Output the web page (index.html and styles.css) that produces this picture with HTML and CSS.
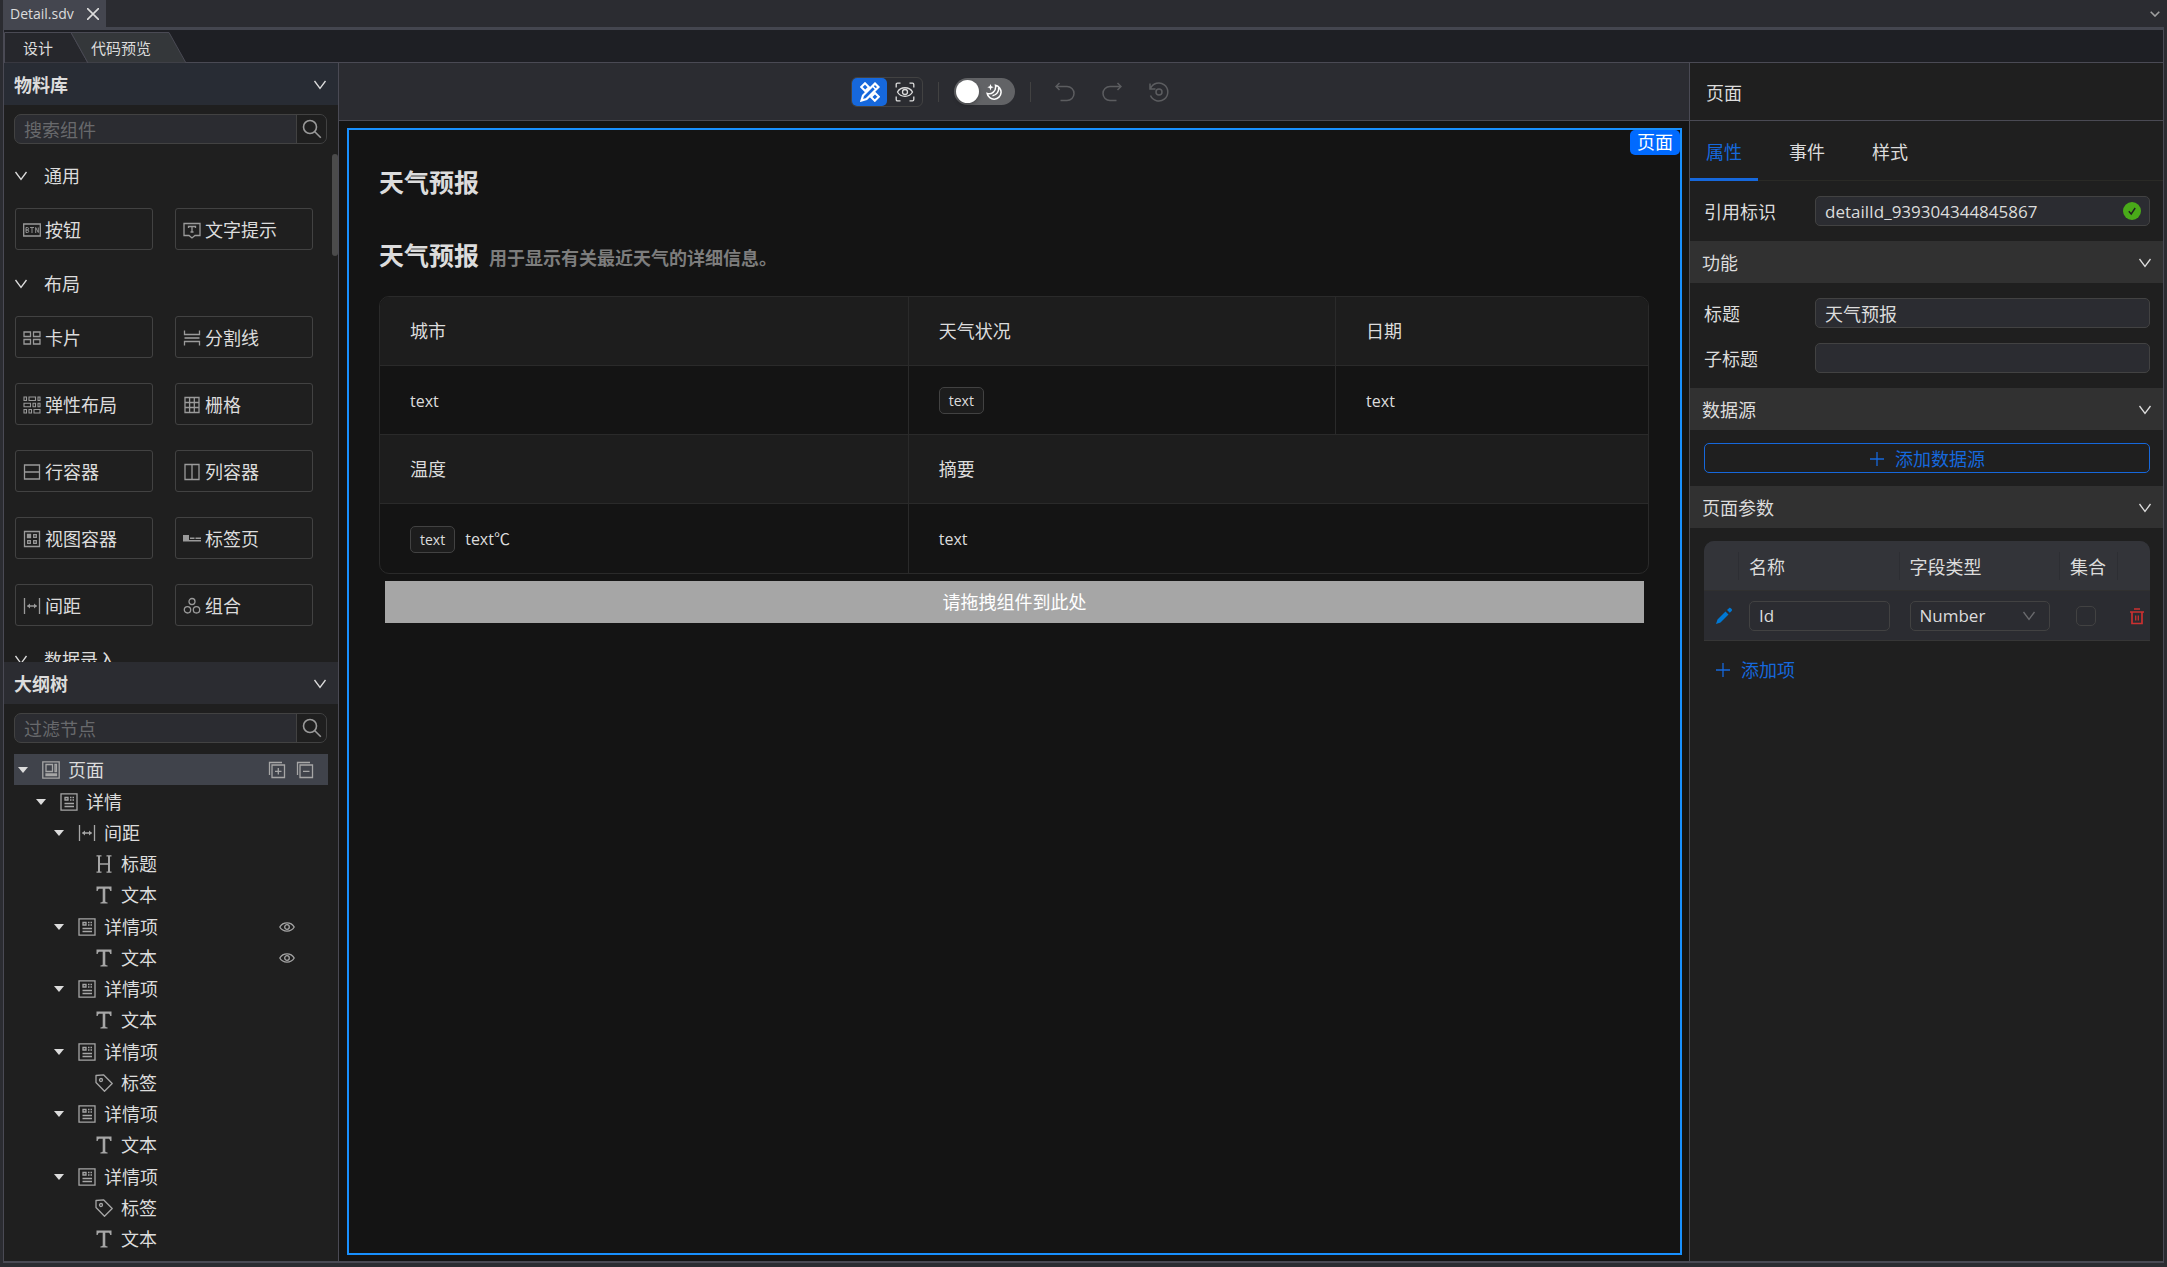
FILE: index.html
```html
<!DOCTYPE html>
<html lang="zh-CN">
<head>
<meta charset="utf-8">
<title>Detail.sdv</title>
<link rel="stylesheet" href="styles.css">
</head>
<body>
<svg class="sprite" aria-hidden="true">
  <symbol id="i-chevron" viewBox="0 0 14 14"><path d="M1.5 3l5.5 7.5L12.500 3"/></symbol>
  <symbol id="i-search" viewBox="0 0 20 20"><circle cx="8" cy="8" r="6.500"/><path d="M12.800 12.800l6 6"/></symbol>
  <symbol id="i-plus" viewBox="0 0 16 16"><path d="M8 1v14M1 8h14"/></symbol>
  <symbol id="i-btn" viewBox="0 0 18 18"><path d="M.7 3h16.600v12H.7z"/><path d="M3 6.500v5h1.500a1.200 1.200 0 0 0 0-2.500H3h1.300a1.200 1.200 0 0 0 0-2.500zM7 6.500h4M9 6.500V12M12.700 12V6.500l2.600 5V6.500" stroke-width=".9"/></symbol>
  <symbol id="i-tip" viewBox="0 0 18 18"><path d="M1 2.500h16v12h-5l-3 2.500-3-2.500H1z"/><path d="M5.500 7V5.500h7V7M9 5.500V11M7.500 11h3"/></symbol>
  <symbol id="i-card" viewBox="0 0 18 18"><path d="M1 3h6.500v4.500H1zM10.500 3H17v4.500h-6.500zM1 10.500h6.500V15H1zM10.500 10.500H17V15h-6.500z"/></symbol>
  <symbol id="i-divider" viewBox="0 0 18 18"><path d="M1.500 1.500v4h15v-4M1.500 16.500v-4h15v4"/><path d="M1.500 9h15" stroke-width="1.600"/></symbol>
  <symbol id="i-flex" viewBox="0 0 18 18"><path d="M1 1h2.500v3.500H1zM6 1h6.500v3.500H6zM15 1h2v3.500h-2zM1 7.300h6.500v3.500H1zM10 7.300h2.500v3.500H10zM15 7.300h2v3.500h-2zM1 13.500h2.500V17H1zM6 13.500h2.500V17H6zM11 13.500h6V17h-6z" stroke-width="1.100"/></symbol>
  <symbol id="i-grid" viewBox="0 0 18 18"><path d="M2 1.500h14v15H2zM6.600 1.500v15M11.300 1.500v15M2 6.500h14M2 11.500h14"/></symbol>
  <symbol id="i-row" viewBox="0 0 18 18"><path d="M1.500 2h15v14h-15zM1.500 9h15"/></symbol>
  <symbol id="i-col" viewBox="0 0 18 18"><path d="M2 1.500h14v15H2zM9 1.500v15"/></symbol>
  <symbol id="i-view" viewBox="0 0 18 18"><path d="M1.500 1.500h15v15h-15zM10.700 4.700h2.600v2.600h-2.600zM4.700 10.700h2.600v2.600H4.700zM10.700 10.700h2.600v2.600h-2.600z"/><path d="M4.500 4.500h3v3h-3z" fill="currentColor"/></symbol>
  <symbol id="i-tabs" viewBox="0 0 18 18"><path d="M0 5h6v5H0zM7 7.500h4.500V9H7zM12.500 7.500H18V9h-5.500zM0 10h18v1.400H0z" fill="currentColor" stroke="none"/></symbol>
  <symbol id="i-space" viewBox="0 0 18 18"><path d="M1.500 1v16M16.500 1v16M4.500 9h9"/><path d="M4 9l3-2.500v5zM14 9l-3-2.500v5z" fill="currentColor" stroke="none"/></symbol>
  <symbol id="i-group" viewBox="0 0 18 18"><circle cx="9" cy="4.500" r="3"/><circle cx="4.500" cy="12.800" r="3.200"/><circle cx="13.500" cy="12.800" r="3.200"/></symbol>
  <symbol id="i-page" viewBox="0 0 18 18"><path d="M.8.8h16.400v16.400H.8zM4 3.500h6.500v7H4zM13 3.500h1.500v7H13zM4 13h10.500v1.500H4z"/></symbol>
  <symbol id="i-detail" viewBox="0 0 18 18"><path d="M1 .8h16v16.400H1z"/><path d="M5 4.500h3v2.500H5zM10 4.500h1.500M12.500 4.500H14M10 7h1.500M12.500 7H14M4.500 10.500h9.500M4.500 13.500h9.500"/></symbol>
  <symbol id="i-h" viewBox="0 0 18 18"><path d="M1.500.8h5M11.500.8h5M1.500 17.200h5M11.500 17.200h5M4 9h10"/><path d="M4 1v16M14 1v16" stroke-width="2"/></symbol>
  <symbol id="i-t" viewBox="0 0 18 18"><path d="M1.500.500h15v4.500h-1.300c-.3-1.700-.8-2.200-2.300-2.200h-2.600v12.300c0 1 .6 1.300 2.300 1.400v1H5.400v-1c1.700-.1 2.300-.4 2.300-1.400V2.800H5c-1.500 0-2 .500-2.300 2.200H1.500z" fill="currentColor" stroke="none"/></symbol>
  <symbol id="i-tag" viewBox="0 0 18 18"><path d="M1 1.500L8.500.800l8.700 8.700-7.700 7.700L1 8.500z" stroke-linejoin="round"/><circle cx="6" cy="6" r="1.500"/></symbol>
  <symbol id="i-eye" viewBox="0 0 16 16"><path d="M.8 8C4 2.500 12 2.500 15.200 8 12 13.500 4 13.500.8 8z"/><circle cx="8" cy="8" r="2.300"/></symbol>
  <symbol id="i-expand" viewBox="0 0 18 18"><path d="M1.500 14V1.500H14M4 4h12.500v12.500H4zM10.300 7v6.500M7 10.300h6.500"/></symbol>
  <symbol id="i-collapse" viewBox="0 0 18 18"><path d="M1.500 14V1.500H14M4 4h12.500v12.500H4zM7 10.300h6.500"/></symbol>
  <symbol id="i-design" viewBox="0 0 20 20"><path d="M5 1.200l4 4-3.800 3.800-4-4zM15 11l3.800 3.800-4 4-3.800-3.800z" stroke-width="2"/><path d="M15 1.500l3.500 3.500L6.500 17l-5 1.500L3 13.500z" stroke-width="2.200"/><path d="M12.500 4l3.500 3.500" stroke-width="1.600"/></symbol>
  <symbol id="i-preview" viewBox="0 0 20 20"><path d="M1.200 5.500V2.500c0-.8.500-1.300 1.300-1.300h3M14.500 1.200h3c.8 0 1.300.5 1.300 1.300v3M18.800 14.500v3c0 .8-.5 1.300-1.300 1.300h-3M5.500 18.800h-3c-.8 0-1.300-.5-1.300-1.300v-3"/><path d="M2.500 10C5.500 4.300 14.500 4.300 17.500 10c-3 5.700-12 5.700-15 0z"/><circle cx="10" cy="10" r="2.500"/></symbol>
  <symbol id="i-moon" viewBox="0 0 16 16"><path d="M9.500 1.300A7 7 0 1 1 1.200 9.500C5.500 11 10.500 7 9.500 1.300zM12.500 3.500c.8 4-2 7.500-6 8.200" stroke-width="1.500"/><path d="M4.500 0l.9 2.300 2.300.9-2.300.9-.9 2.300-.9-2.300-2.300-.9 2.300-.9z" fill="currentColor" stroke="none"/></symbol>
  <symbol id="i-undo" viewBox="0 0 20 20"><path d="M4.500 1L1 4.500 4.500 8M1.300 4.500H12a7 7 0 0 1 0 14H5.500"/></symbol>
  <symbol id="i-redo" viewBox="0 0 20 20"><path d="M15.500 1L19 4.500 15.500 8M18.700 4.500H8a7 7 0 0 0 0 14h6.500"/></symbol>
  <symbol id="i-history" viewBox="0 0 20 20"><path d="M1 1.500v5.500h5.500M1.500 6.500A9 9 0 1 1 1.500 13.500"/><circle cx="10" cy="10" r="3"/></symbol>
  <symbol id="i-check" viewBox="0 0 18 18"><circle cx="9" cy="9" r="9" fill="#49aa19" stroke="none"/><path d="M5.800 9.300l2.400 2.700 4-6" stroke="#1f1f1f" stroke-width="1.400"/></symbol>
  <symbol id="i-pencil" viewBox="0 0 18 18"><path d="M1 17l1.500-4.500L10.500 4.500l3 3L5.500 15.500zM12 3L14 1.200c.7-.6 1.400-.4 2 .2l.6.700c.6.600.6 1.300 0 1.900L14.800 5.800z" fill="currentColor" stroke="none"/></symbol>
  <symbol id="i-trash" viewBox="0 0 16 18"><path d="M1 5h14M5 2h6M3 5v11.500h10V5" stroke-width="1.700"/><path d="M6.700 8.500v5M9.300 8.500v5" stroke-width="1.300"/></symbol>
  <symbol id="i-caret" viewBox="0 0 10 8"><path d="M0 1h10L5 7z" fill="currentColor" stroke="none"/></symbol>
</svg>

<div class="app">
  <header class="file-tabs">
    <div class="file-tab"><span>Detail.sdv</span>
      <button class="close" aria-label="关闭"><svg viewBox="0 0 12 12"><path d="M0 0l12 12M12 0L0 12"/></svg></button>
    </div>
    <button class="more" aria-label="更多"><svg viewBox="0 0 10 6"><path d="M.7.700L5 5l4.300-4.300"/></svg></button>
  </header>

  <div class="frame">
    <nav class="mode-tabs">
      <svg class="mode-shape" viewBox="0 0 184 31" aria-hidden="true">
        <path d="M.5 31V.5H67L84 31z" fill="#26272c"/>
        <path d="M67 .5h98L182 31H84z" fill="#34373a"/>
      </svg>
      <button class="mode mode-design">设计</button>
      <button class="mode mode-code">代码预览</button>
    </nav>

    <div class="workspace">
      <aside class="left">
        <section class="pane">
          <header class="pane-head lib"><h2>物料库</h2><svg class="i14"><use href="#i-chevron"/></svg></header>
          <form class="search"><input type="text" placeholder="搜索组件" aria-label="搜索组件"><button type="button" aria-label="搜索"><svg><use href="#i-search"/></svg></button></form>
          <div class="library">
            <h3 class="group"><svg class="i14"><use href="#i-chevron"/></svg>通用</h3>
            <div class="cards">
              <button><svg><use href="#i-btn"/></svg>按钮</button>
              <button><svg><use href="#i-tip"/></svg>文字提示</button>
            </div>
            <h3 class="group"><svg class="i14"><use href="#i-chevron"/></svg>布局</h3>
            <div class="cards">
              <button><svg><use href="#i-card"/></svg>卡片</button>
              <button><svg><use href="#i-divider"/></svg>分割线</button>
              <button><svg><use href="#i-flex"/></svg>弹性布局</button>
              <button><svg><use href="#i-grid"/></svg>栅格</button>
              <button><svg><use href="#i-row"/></svg>行容器</button>
              <button><svg><use href="#i-col"/></svg>列容器</button>
              <button><svg><use href="#i-view"/></svg>视图容器</button>
              <button><svg><use href="#i-tabs"/></svg>标签页</button>
              <button><svg><use href="#i-space"/></svg>间距</button>
              <button><svg><use href="#i-group"/></svg>组合</button>
            </div>
            <h3 class="group"><svg class="i14"><use href="#i-chevron"/></svg>数据录入</h3>
            <div class="thumb"></div>
          </div>
        </section>

        <section class="pane">
          <header class="pane-head"><h2>大纲树</h2><svg class="i14"><use href="#i-chevron"/></svg></header>
          <form class="search"><input type="text" placeholder="过滤节点" aria-label="过滤节点"><button type="button" aria-label="搜索"><svg><use href="#i-search"/></svg></button></form>
          <ul class="tree">
            <li class="d0 selected"><svg class="caret"><use href="#i-caret"/></svg><svg><use href="#i-page"/></svg>页面<span class="tools"><svg><use href="#i-expand"/></svg><svg><use href="#i-collapse"/></svg></span></li>
            <li class="d1"><svg class="caret"><use href="#i-caret"/></svg><svg><use href="#i-detail"/></svg>详情</li>
            <li class="d2"><svg class="caret"><use href="#i-caret"/></svg><svg><use href="#i-space"/></svg>间距</li>
            <li class="leaf"><svg><use href="#i-h"/></svg>标题</li>
            <li class="leaf"><svg><use href="#i-t"/></svg>文本</li>
            <li class="d2"><svg class="caret"><use href="#i-caret"/></svg><svg><use href="#i-detail"/></svg>详情项<svg class="eye"><use href="#i-eye"/></svg></li>
            <li class="leaf"><svg><use href="#i-t"/></svg>文本<svg class="eye"><use href="#i-eye"/></svg></li>
            <li class="d2"><svg class="caret"><use href="#i-caret"/></svg><svg><use href="#i-detail"/></svg>详情项</li>
            <li class="leaf"><svg><use href="#i-t"/></svg>文本</li>
            <li class="d2"><svg class="caret"><use href="#i-caret"/></svg><svg><use href="#i-detail"/></svg>详情项</li>
            <li class="leaf"><svg><use href="#i-tag"/></svg>标签</li>
            <li class="d2"><svg class="caret"><use href="#i-caret"/></svg><svg><use href="#i-detail"/></svg>详情项</li>
            <li class="leaf"><svg><use href="#i-t"/></svg>文本</li>
            <li class="d2"><svg class="caret"><use href="#i-caret"/></svg><svg><use href="#i-detail"/></svg>详情项</li>
            <li class="leaf"><svg><use href="#i-tag"/></svg>标签</li>
            <li class="leaf"><svg><use href="#i-t"/></svg>文本</li>
            <li class="d2"><svg class="caret"><use href="#i-caret"/></svg><svg><use href="#i-detail"/></svg>详情项</li>
          </ul>
        </section>
      </aside>

      <main class="center">
        <div class="toolbar">
          <div class="segment">
            <button class="on" aria-label="设计"><svg><use href="#i-design"/></svg></button>
            <button aria-label="预览"><svg><use href="#i-preview"/></svg></button>
          </div>
          <i class="sep"></i>
          <label class="switch"><input type="checkbox" role="switch" aria-label="深色模式"><svg><use href="#i-moon"/></svg></label>
          <i class="sep"></i>
          <div class="history">
            <button aria-label="撤销" disabled><svg><use href="#i-undo"/></svg></button>
            <button aria-label="重做" disabled><svg><use href="#i-redo"/></svg></button>
            <button aria-label="历史" disabled><svg><use href="#i-history"/></svg></button>
          </div>
        </div>
        <div class="stage">
          <div class="canvas">
            <span class="badge">页面</span>
            <h1>天气预报</h1>
            <div class="heading"><h2>天气预报</h2><strong>用于显示有关最近天气的详细信息。</strong></div>
            <table class="detail">
              <colgroup><col class="c1"><col class="c2"><col class="c3"></colgroup>
              <tr><th>城市</th><th>天气状况</th><th>日期</th></tr>
              <tr><td>text</td><td><span class="tag">text</span></td><td>text</td></tr>
              <tr><th>温度</th><th colspan="2">摘要</th></tr>
              <tr><td><span class="tag">text</span>text℃</td><td colspan="2">text</td></tr>
            </table>
            <div class="drop">请拖拽组件到此处</div>
          </div>
        </div>
      </main>

      <aside class="right">
        <header class="props-head">页面</header>
        <nav class="props-tabs"><button class="on">属性</button><button>事件</button><button>样式</button></nav>
        <div class="fields">
          <div class="field"><label for="ref">引用标识</label><div class="box"><input id="ref" class="latin" type="text" value="detailId_939304344845867"><svg class="ok"><use href="#i-check"/></svg></div></div>
        </div>
        <h3 class="section">功能<svg class="i14"><use href="#i-chevron"/></svg></h3>
        <div class="fields">
          <div class="field"><label for="title">标题</label><div class="box"><input id="title" type="text" value="天气预报"></div></div>
          <div class="field"><label for="sub">子标题</label><div class="box"><input id="sub" type="text"></div></div>
        </div>
        <h3 class="section">数据源<svg class="i14"><use href="#i-chevron"/></svg></h3>
        <div class="source"><button><svg><use href="#i-plus"/></svg>添加数据源</button></div>
        <h3 class="section">页面参数<svg class="i14"><use href="#i-chevron"/></svg></h3>
        <div class="params">
          <table>
            <colgroup><col class="p-edit"><col><col><col class="p-set"><col class="p-del"></colgroup>
            <thead><tr><th></th><th>名称</th><th>字段类型</th><th>集合</th><th></th></tr></thead>
            <tbody><tr>
              <td class="edit"><button aria-label="编辑"><svg><use href="#i-pencil"/></svg></button></td>
              <td><input class="cell latin" type="text" value="Id" aria-label="名称"></td>
              <td><div class="pick"><select class="cell latin" aria-label="字段类型"><option>Number</option></select><svg class="i14"><use href="#i-chevron"/></svg></div></td>
              <td class="set"><input class="tick" type="checkbox" aria-label="集合"></td>
              <td class="del"><button aria-label="删除"><svg><use href="#i-trash"/></svg></button></td>
            </tr></tbody>
          </table>
          <button class="add"><svg><use href="#i-plus"/></svg>添加项</button>
        </div>
      </aside>
    </div>
  </div>
</div>
</body>
</html>
```
FILE: styles.css
```css
* { box-sizing: border-box; }
body, h1, h2, h3, ul { margin: 0; padding: 0; }
body {
  background: #2b2c31;
  color: #dcdcdc;
  font: 18px/26px "Open Sans", "Noto Sans CJK SC", sans-serif;
}
button, input, select { font: inherit; color: inherit; }
button { background: none; border: 0; padding: 0; margin: 0; }
h2, h3, th { font-size: 18px; font-weight: 400; }
svg { display: block; flex: none; fill: none; stroke: currentColor; stroke-width: 1.3; }
.sprite { position: absolute; width: 0; height: 0; }
.i14 { width: 14px; height: 14px; }
.latin { font-size: 17px; }

.app { display: flex; flex-direction: column; height: 100vh; padding: 0 3px 4px; overflow: hidden; }

/* file tabs */
.file-tabs { display: flex; flex: none; justify-content: space-between; height: 30px; border-bottom: 3px solid #44464f; }
.file-tab { display: flex; align-items: center; gap: 13px; padding: 0 7px; background: #44464f; font-size: 14px; line-height: 20px; }
.close svg { width: 12px; height: 12px; stroke-width: 1.600; }
.more { width: 14px; }
.more svg { width: 10px; height: 6px; stroke: #a0a0a0; stroke-width: 1.600; }

.frame { display: flex; flex: 1; flex-direction: column; min-height: 0; border: solid #4a4a54; border-width: 0 1px 2px; }

/* mode tabs */
.mode-tabs { position: relative; display: flex; flex: none; height: 33px; padding-top: 3px; background: #1e1f24; border-bottom: 1px solid #4a4a54; }
.mode-shape { position: absolute; left: 0; top: 2px; width: 184px; height: 31px; stroke: #4a4a54; stroke-width: 1; }
.mode { position: relative; font-size: 15px; line-height: 20px; text-align: left; }
.mode-design { width: 67px; padding-left: 19px; }
.mode-code { width: 100px; padding-left: 20px; }

.workspace { display: flex; flex: 1; min-height: 0; }

/* left column */
.left { display: flex; flex: none; flex-direction: column; width: 335px; background: #1f1f1f; border-right: 1px solid #4a4a54; }
.pane { display: flex; flex: 1 1 0; flex-direction: column; min-height: 0; overflow: hidden; }
.pane-head { display: flex; flex: none; align-items: center; justify-content: space-between; height: 42px; padding: 2px 11px 0 10px; background: #2b2c31; }
.pane-head.lib { background: #282c34; }
.pane-head h2 { font-weight: 700; }
.search { display: flex; flex: none; height: 30px; margin: 9px 11px 0 10px; background: #2b2c31; border: 1px solid #424242; border-radius: 7px; }
.search input { flex: 1; min-width: 0; padding: 1px 9px 0; background: none; border: 0; }
.search input::placeholder { color: #68696c; }
.search button { display: grid; place-items: center; width: 30px; background: #1f1f1f; border-left: 1px solid #424242; border-radius: 0 6px 6px 0; color: #9a9a9a; }
.search button svg { width: 20px; height: 20px; stroke-width: 1.600; }

.library { position: relative; flex: 1; min-height: 0; overflow: hidden; }
.group { display: flex; align-items: center; gap: 16px; height: 64px; padding-left: 10px; }
.cards { display: grid; grid-template-columns: 1fr 1fr; gap: 25px 22px; padding: 0 25px 2px 11px; }
.cards button { display: flex; align-items: center; gap: 4px; height: 42px; padding: 2px 0 0 7px; border: 1px solid #424242; border-radius: 3px; }
.cards svg { width: 18px; height: 18px; color: #9a9a9a; }
.thumb { position: absolute; right: 0; top: 10px; width: 6px; height: 102px; background: #4b4b4b; border-radius: 3px; }

/* outline tree */
.tree { list-style: none; padding: 11px 10px 0; }
.tree li { display: flex; align-items: center; gap: 8px; height: 31px; }
.tree li:nth-child(4n + 1) { margin-bottom: 1px; }
.tree svg { width: 18px; height: 18px; color: #a6a6a6; }
.tree .caret { width: 10px; height: 8px; margin-right: 6px; color: #dcdcdc; }
.d0 { padding-left: 4px; }
.d1 { padding-left: 22px; }
.d2 { padding-left: 40px; }
.leaf { padding-left: 81px; }
.selected { background: #40434b; }
.tools { display: flex; gap: 10px; margin-left: auto; padding-right: 14px; }
.tree .eye { width: 16px; height: 16px; margin: 0 33px 0 auto; }

/* canvas column */
.center { display: flex; flex: 1; flex-direction: column; min-width: 0; }
.toolbar { display: flex; flex: none; align-items: center; justify-content: center; gap: 15px; height: 58px; padding-right: 8px; background: #2b2c31; border-bottom: 1px solid #4a4a54; }
.segment { display: flex; height: 30px; border: 1px solid #424242; border-radius: 6px; }
.segment button { display: grid; place-items: center; width: 35px; border-radius: 5px; }
.segment .on { background: #1668dc; color: #fff; }
.segment svg { width: 20px; height: 20px; }
.sep { width: 1px; height: 20px; background: #424242; }
.switch { position: relative; display: flex; width: 61px; height: 27px; }
.switch input { width: 61px; height: 27px; margin: 0; padding: 2px; appearance: none; background: #626366; border-radius: 14px; }
.switch input::before { content: ""; display: block; width: 23px; height: 23px; background: #fff; border-radius: 50%; box-shadow: 0 2px 4px #0004; }
.switch svg { position: absolute; right: 13px; top: 6px; width: 16px; height: 16px; color: #fff; }
.history { display: flex; gap: 27px; padding-left: 9px; color: #5c5d60; }
.history svg { width: 20px; height: 20px; stroke-width: 1.500; }

.stage { display: flex; flex: 1; min-height: 0; padding: 7px 7px 6px 8px; background: #141414; }
.canvas { position: relative; flex: 1; min-width: 0; padding: 32px 31px 0 30px; border: 2px solid #1890ff; }
.badge { position: absolute; right: 0; top: 0; padding: 0 7px; background: #006aff; border-radius: 5px; color: #fff; line-height: 25px; }
.canvas h1, .canvas h2 { font-size: 25px; font-weight: 700; line-height: 40px; }
.heading { display: flex; align-items: baseline; gap: 10px; margin: 33px 0 21px; }
.heading strong { color: #7d7d7d; }
.detail { width: 100%; table-layout: fixed; border-collapse: separate; border-spacing: 0; border: 1px solid #2a2a2a; border-radius: 10px; overflow: hidden; }
.detail .c1 { width: 41.7%; }
.detail .c2 { width: 33.7%; }
.detail th, .detail td { height: 69px; padding: 0 30px; text-align: left; border-right: 1px solid #2a2a2a; border-bottom: 1px solid #2a2a2a; }
.detail td { padding-top: 1px; font-size: 16px; }
.detail th { background: #1d1d1d; }
.detail tr > :last-child { border-right: 0; }
.detail tr:last-child td { border-bottom: 0; }
.tag { display: inline-block; margin-right: 10px; padding: 0 9px; background: #1d1d1d; border: 1px solid #424242; border-radius: 5px; font-size: 14px; line-height: 25px; }
.drop { margin: 7px 5px 0 6px; background: #a6a6a6; color: #fff; line-height: 42px; text-align: center; }

/* properties column */
.right { flex: none; width: 474px; background: #1f1f1f; border-left: 1px solid #4a4a54; }
.props-head { height: 58px; padding: 0 16px; border-bottom: 1px solid #4a4a54; line-height: 60px; }
.props-tabs { display: flex; gap: 15px; height: 60px; border-bottom: 1px solid #2a2a26; }
.props-tabs button { height: 60px; padding: 4px 16px 0; border-bottom: 3px solid transparent; }
.props-tabs .on { color: #1668dc; border-color: #1668dc; }
.fields { display: grid; gap: 15px; padding: 15px 13px 15px 14px; }
.field { display: grid; grid-template-columns: 111px 1fr; align-items: center; }
.field label { padding-top: 2px; }
.box { position: relative; }
.box input { width: 100%; }
.box input, .cell { display: block; height: 30px; padding: 0 9px; background: #2b2c31; border: 1px solid #424242; border-radius: 5px; }
.ok { position: absolute; right: 9px; top: 6px; width: 18px; height: 18px; }
.section { display: flex; align-items: center; justify-content: space-between; height: 42px; padding: 2px 11px 0 12px; background: #313131; }
.source { padding: 13px 13px 13px 14px; }
.source button { display: flex; align-items: center; justify-content: center; gap: 10px; width: 100%; height: 30px; padding-top: 1px; border: 1px solid #1668dc; border-radius: 5px; color: #1668dc; }
.source svg, .add svg { width: 16px; height: 16px; }
.params { padding: 13px 13px 0 14px; }
.params table { width: 100%; table-layout: fixed; border-collapse: separate; border-spacing: 0; background: #2b2c31; border-radius: 10px 10px 0 0; }
.p-edit { width: 35px; }
.p-set { width: 58px; }
.p-del { width: 32px; }
.params th { height: 50px; padding: 2px 10px 0; background: #333439; border-bottom: 1px solid #303030; text-align: left; white-space: nowrap; }
.params th { background-image: linear-gradient(#2d2e33, #2d2e33); background-repeat: no-repeat; background-size: 1px 28px; background-position: 100% 50%; }
.params th:first-child { border-radius: 10px 0 0 0; }
.params th:last-child { border-radius: 0 10px 0 0; background-image: none; }
.params td { height: 50px; padding: 0 10px; border-bottom: 1px solid #363636; }
.params .cell { width: 100%; }
.pick { position: relative; }
.pick select { appearance: none; }
.pick svg { position: absolute; right: 14px; top: 8px; color: #6a6b6e; }
.params td button { display: block; }
.params .edit { padding: 0 0 0 11px; color: #0078d4; }
.edit svg { width: 18px; height: 18px; }
.params .set { padding: 0 0 0 16px; }
.tick { display: block; width: 20px; height: 20px; margin: 0; appearance: none; border: 1px solid #424242; border-radius: 5px; }
.params .del { padding: 0 0 0 11px; color: #cc3030; }
.del svg { width: 16px; height: 18px; }
.add { display: flex; align-items: center; gap: 10px; margin-top: 16px; padding-left: 11px; color: #1668dc; }
```
